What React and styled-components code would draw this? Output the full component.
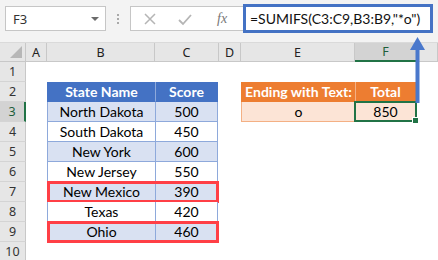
import React from "react";
import styled, { createGlobalStyle, css } from "styled-components";

const GlobalStyle = createGlobalStyle`
  html, body {
    margin: 0;
    padding: 0;
    background: #ffffff;
  }
  * {
    box-sizing: border-box;
  }
`;

const Page = styled.div`
  position: relative;
  width: 438px;
  height: 260px;
  overflow: hidden;
  background: #ffffff;
  font-family: "Lato", "Liberation Sans", sans-serif;
`;

const Toolbar = styled.div`
  height: 43px;
  padding: 0 0 5px 5px;
  display: flex;
  align-items: center;
  background: #f3f3f3;
  border-bottom: 1px solid #dadada;
`;

const NameBox = styled.div`
  width: 101px;
  height: 25px;
  background: #ffffff;
  border: 1px solid #c6c6c6;
  display: flex;
  align-items: center;
  justify-content: space-between;
  padding: 0 6px 0 7px;
  font-family: "Noto Sans", "Open Sans", sans-serif;
  font-size: 13px;
  color: #333;
`;

const Caret = styled.span`
  width: 0;
  height: 0;
  border-left: 4px solid transparent;
  border-right: 4px solid transparent;
  border-top: 4px solid #6b6b6b;
`;

const Grip = styled.div`
  width: 24px;
  display: flex;
  flex-direction: column;
  align-items: center;
  gap: 2px;

  span {
    width: 2px;
    height: 2px;
    background: #a9a9a9;
  }
`;

const FuncBox = styled.div`
  width: 113px;
  height: 25px;
  background: #ffffff;
  border: 1px solid #c6c6c6;
  border-right: none;
  display: flex;
  align-items: center;
  padding-left: 12px;
  gap: 20px;
`;

const Fx = styled.span`
  font-family: "Liberation Serif", serif;
  font-style: italic;
  font-size: 14px;
  color: #777;
  margin-left: 4px;
`;

const FormulaBox = styled.div`
  width: 190px;
  height: 29px;
  border: 3px solid #4472c4;
  background: #ffffff;
  display: flex;
  align-items: center;
  padding-left: 4px;
  font-size: 14px;
  color: #111;
`;

const Sheet = styled.div`
  display: grid;
  grid-template-columns: 26px 21px 108px 64px 22px 114px 62px 1fr;
  grid-template-rows: 19px repeat(10, 20px);
`;

const Corner = styled.div`
  background: #e6e6e6;
  border-right: 1px solid #c8c8c8;
  border-bottom: 1px solid #c8c8c8;
  position: relative;

  &::after {
    content: "";
    position: absolute;
    right: 3px;
    bottom: 3px;
    border-left: 12px solid transparent;
    border-bottom: 12px solid #b7b7b7;
  }
`;

const ColHead = styled.div`
  background: ${(p) => (p.$active ? "#d3d3d3" : "#e6e6e6")};
  border-right: 1px solid #c8c8c8;
  border-bottom: ${(p) => (p.$active ? "2px solid #217346" : "1px solid #c8c8c8")};
  color: ${(p) => (p.$active ? "#1e5e3a" : "#222")};
  display: flex;
  align-items: center;
  justify-content: center;
  font-family: "Noto Sans", "Open Sans", sans-serif;
  font-size: 12.5px;
`;

const RowHead = styled.div`
  grid-column: 1;
  background: ${(p) => (p.$active ? "#d3d3d3" : "#e6e6e6")};
  border-right: ${(p) => (p.$active ? "2px solid #217346" : "1px solid #c8c8c8")};
  border-bottom: 1px solid #d4d4d4;
  color: ${(p) => (p.$active ? "#1e5e3a" : "#333")};
  display: flex;
  align-items: center;
  justify-content: center;
  font-family: "Noto Sans", "Open Sans", sans-serif;
  font-size: 12.5px;
`;

const StateTable = styled.div`
  grid-column: 3 / 5;
  grid-row: 3 / 11;
  display: flex;
  flex-direction: column;
  width: 171px;
`;

const TRow = styled.div`
  position: relative;
  display: grid;
  grid-template-columns: 108px 63px;
  height: 20px;

  ${(p) =>
    p.$mark &&
    css`
      &::after {
        content: "";
        position: absolute;
        inset: -1px -1px -1px 0;
        border: 3px solid #ff3f46;
        pointer-events: none;
      }
    `}
`;

const Cell = styled.div`
  display: flex;
  align-items: center;
  justify-content: center;
  font-size: 14px;
  color: #000;
  background: ${(p) => p.$bg};
  border-left: 1px solid ${(p) => p.$line};
  border-bottom: 1px solid ${(p) => p.$line};
  &:last-child {
    border-right: 1px solid ${(p) => p.$line};
  }
`;

const HeadCell = styled(Cell)`
  font-weight: 700;
  color: #ffffff;
`;

const LookupTable = styled.div`
  grid-column: 6 / 8;
  grid-row: 3 / 5;
  display: flex;
  flex-direction: column;
  width: 175px;
`;

const LRow = styled.div`
  display: grid;
  grid-template-columns: 114px 61px;
  height: 20px;
`;

const SelCell = styled(Cell)`
  position: relative;

  &::after {
    content: "";
    position: absolute;
    inset: -1px -2px -1px -2px;
    border: 2px solid #217346;
  }

  &::before {
    content: "";
    position: absolute;
    right: -4px;
    bottom: -3px;
    width: 5px;
    height: 5px;
    background: #217346;
    border: 1px solid #ffffff;
    z-index: 1;
  }
`;

const Arrow = styled.svg`
  position: absolute;
  left: 409px;
  top: 35px;
`;

const states = [
  ["North Dakota", 500],
  ["South Dakota", 450],
  ["New York", 600],
  ["New Jersey", 550],
  ["New Mexico", 390],
  ["Texas", 420],
  ["Ohio", 460],
];

const BLUE_LINE = "#8ea9db";
const ORANGE_LINE = "#f4b084";

const App = () => {
  const letters = ["A", "B", "C", "D", "E", "F", ""];
  return (
    <Page>
      <GlobalStyle />
      <Toolbar>
        <NameBox>
          F3
          <Caret />
        </NameBox>
        <Grip>
          <span />
          <span />
          <span />
        </Grip>
        <FuncBox>
          <svg width="14" height="14" viewBox="0 0 14 14">
            <path d="M2 2 L12 12 M12 2 L2 12" stroke="#b5b5b5" strokeWidth="1.5" />
          </svg>
          <svg width="16" height="14" viewBox="0 0 16 14">
            <path d="M2 8 L6 12 L14 3" stroke="#b5b5b5" strokeWidth="1.8" fill="none" />
          </svg>
          <Fx>fx</Fx>
        </FuncBox>
        <FormulaBox>=SUMIFS(C3:C9,B3:B9,"*o")</FormulaBox>
      </Toolbar>

      <Sheet>
        <Corner />
        {letters.map((l, i) => (
          <ColHead key={i} $active={l === "F"}>
            {l}
          </ColHead>
        ))}
        {Array.from({ length: 10 }, (_, i) => (
          <RowHead key={i} style={{ gridRow: i + 2 }} $active={i === 2}>
            {i + 1}
          </RowHead>
        ))}

        <StateTable>
          <TRow>
            <HeadCell $bg="#4472c4" $line="#4472c4">State Name</HeadCell>
            <HeadCell $bg="#4472c4" $line="#4472c4" style={{ borderLeftColor: "#8ea9db" }}>
              Score
            </HeadCell>
          </TRow>
          {states.map(([name, score], i) => {
            const bg = i % 2 === 0 ? "#d9e1f2" : "#ffffff";
            return (
              <TRow key={name} $mark={name === "New Mexico" || name === "Ohio"}>
                <Cell $bg={bg} $line={BLUE_LINE}>{name}</Cell>
                <Cell $bg={bg} $line={BLUE_LINE}>{score}</Cell>
              </TRow>
            );
          })}
        </StateTable>

        <LookupTable>
          <LRow>
            <HeadCell $bg="#ed7d31" $line="#ed7d31">Ending with Text:</HeadCell>
            <HeadCell $bg="#ed7d31" $line="#ed7d31" style={{ borderLeftColor: ORANGE_LINE }}>
              Total
            </HeadCell>
          </LRow>
          <LRow>
            <Cell $bg="#fce4d6" $line={ORANGE_LINE}>o</Cell>
            <SelCell $bg="#fce4d6" $line={ORANGE_LINE}>850</SelCell>
          </LRow>
        </LookupTable>
      </Sheet>

      <Arrow width="18" height="70" viewBox="0 0 18 70">
        <rect x="6.5" y="12" width="4" height="56" fill="#4a78cc" />
        <polygon points="8.5,2 1,15 16,15" fill="#4a78cc" />
      </Arrow>
    </Page>
  );
};

export default App;
